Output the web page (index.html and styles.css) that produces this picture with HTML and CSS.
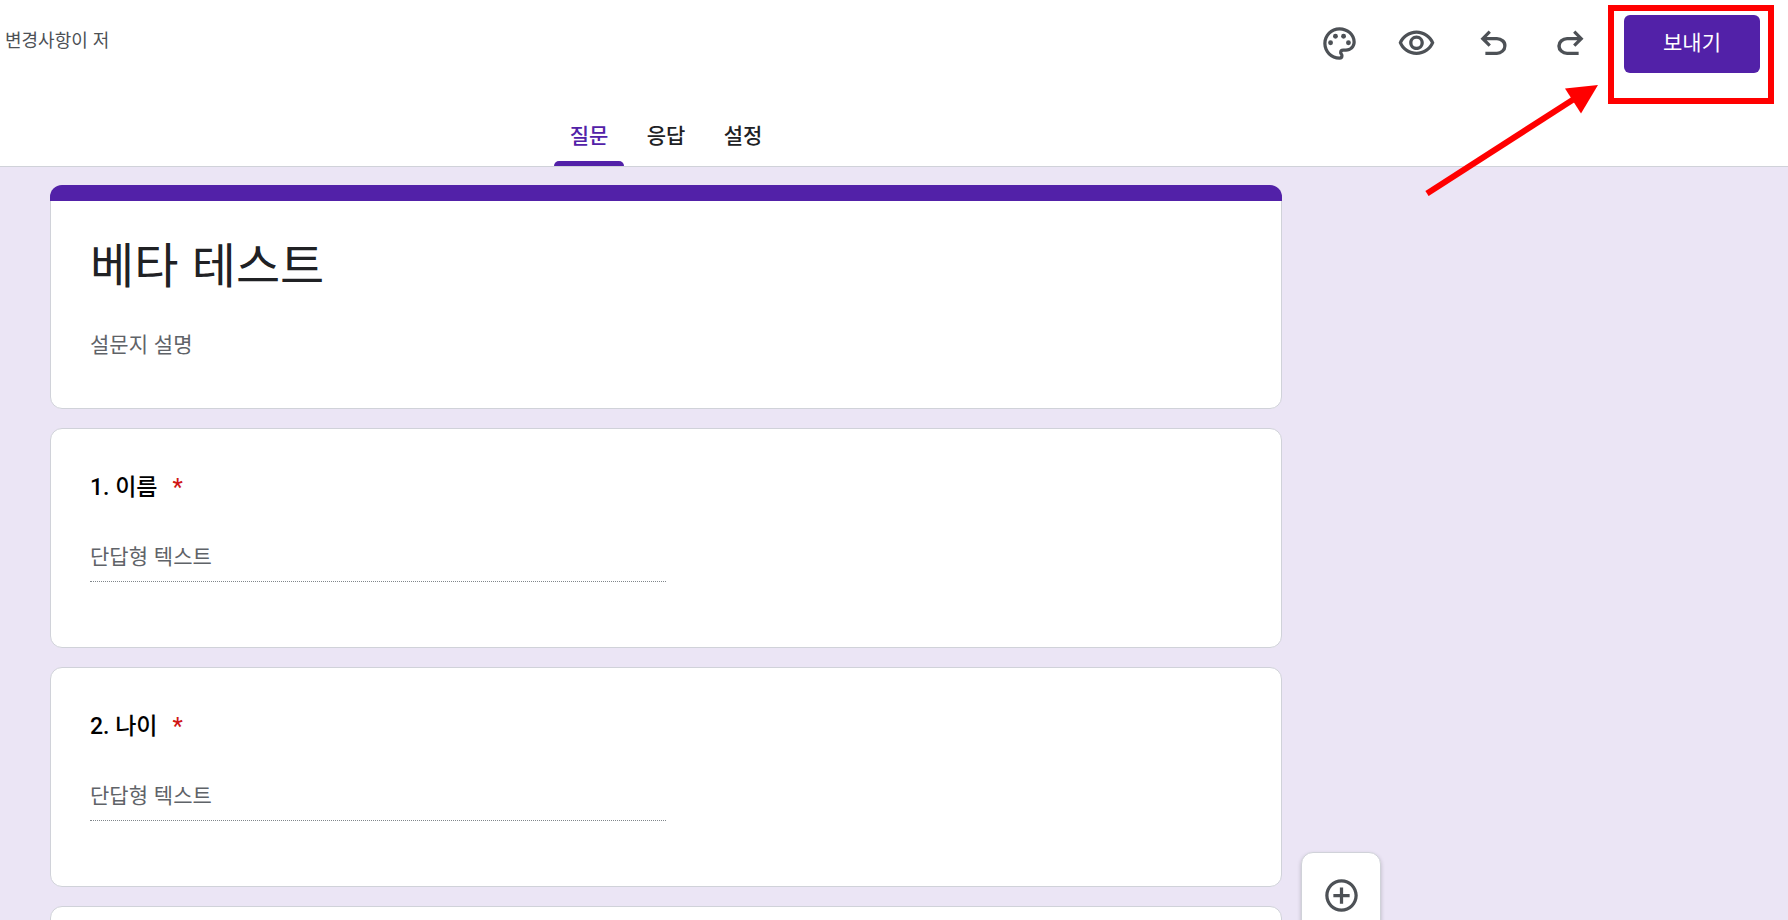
FILE: index.html
```html
<!DOCTYPE html>
<html lang="ko">
<head>
    <meta charset="UTF-8">
    <meta name="viewport" content="width=device-width, initial-scale=1.0">
    <title>베타 테스트</title>
    <link rel="stylesheet" href="styles.css">
</head>
<body>

    <header class="header">
        <div class="toolbar">
            <span class="status">변경사항이 저</span>
            <button type="button" class="icon-button" aria-label="테마 맞춤설정">
                <svg class="icon" viewBox="0 0 24 24">
                    <path d="M12 22C6.49 22 2 17.51 2 12S6.49 2 12 2s10 4.04 10 9c0 3.31-2.69 6-6 6h-1.77c-.28 0-.5.22-.5.5 0 .12.05.23.13.33.41.47.64 1.06.64 1.67A2.5 2.5 0 0 1 12 22zm0-18c-4.41 0-8 3.59-8 8s3.59 8 8 8c.28 0 .5-.22.5-.5a.54.54 0 0 0-.14-.35c-.41-.46-.63-1.05-.63-1.65a2.5 2.5 0 0 1 2.5-2.5H16c2.21 0 4-1.79 4-4 0-3.86-3.59-7-8-7z"/>
                    <circle cx="6.5" cy="11.5" r="1.5"/>
                    <circle cx="9.5" cy="7.5" r="1.5"/>
                    <circle cx="14.5" cy="7.5" r="1.5"/>
                    <circle cx="17.5" cy="11.5" r="1.5"/>
                </svg>
            </button>
            <button type="button" class="icon-button" aria-label="미리보기">
                <svg class="icon" viewBox="0 0 24 24">
                    <path d="M12 6c3.79 0 7.17 2.13 8.82 5.5C19.17 14.87 15.79 17 12 17s-7.17-2.13-8.82-5.5C4.83 8.13 8.21 6 12 6m0-2C7 4 2.73 7.11 1 11.5 2.73 15.89 7 19 12 19s9.27-3.11 11-7.5C21.27 7.11 17 4 12 4zm0 5a2.5 2.5 0 0 1 0 5 2.5 2.5 0 0 1 0-5m0-2c-2.48 0-4.5 2.02-4.5 4.5S9.52 16 12 16s4.5-2.02 4.5-4.5S14.48 7 12 7z"/>
                </svg>
            </button>
            <button type="button" class="icon-button" aria-label="실행취소">
                <svg class="icon" viewBox="0 -960 960 960">
                    <path d="M280-200v-80h284q63 0 109.500-40T720-420q0-60-46.500-100T564-560H312l104 104-56 56-200-200 200-200 56 56-104 104h252q97 0 169.500 63T800-420q0 94-72.500 157T564-200H280Z"/>
                </svg>
            </button>
            <button type="button" class="icon-button" aria-label="재실행">
                <svg class="icon" viewBox="0 -960 960 960">
                    <path d="M396-200q-97 0-169.500-63T154-420q0-94 72.500-157T396-640h252L544-744l56-56 200 200-200 200-56-56 104-104H396q-63 0-109.500 40T240-420q0 60 46.500 100T396-280h284v80H396Z"/>
                </svg>
            </button>
            <button type="button" class="send-button">보내기</button>
        </div>
        <nav class="tabs">
            <a href="#questions" class="tab tab-active">질문</a>
            <a href="#responses" class="tab">응답</a>
            <a href="#settings" class="tab">설정</a>
        </nav>
    </header>

    <main class="editor">
        <form class="form" id="questions">
            <section class="card card-title">
                <input type="text" class="form-title" aria-label="설문지 제목" value="베타 테스트">
                <input type="text" class="form-description" aria-label="설문지 설명" placeholder="설문지 설명">
            </section>
            <section class="card card-question">
                <label class="question" for="answer-name">1. 이름<span class="required">*</span></label>
                <input type="text" class="answer" id="answer-name" placeholder="단답형 텍스트" readonly>
            </section>
            <section class="card card-question">
                <label class="question" for="answer-age">2. 나이<span class="required">*</span></label>
                <input type="text" class="answer" id="answer-age" placeholder="단답형 텍스트" readonly>
            </section>
            <section class="card card-question"></section>
        </form>
        <aside class="side-toolbar">
            <button type="button" class="side-button" aria-label="질문 추가">
                <svg class="icon" viewBox="0 0 24 24">
                    <path d="M13 7h-2v4H7v2h4v4h2v-4h4v-2h-4V7zm-1-5C6.480 2 2 6.480 2 12s4.480 10 10 10 10-4.480 10-10S17.520 2 12 2zm0 18c-4.410 0-8-3.590-8-8s3.590-8 8-8 8 3.590 8 8-3.590 8-8 8z"/>
                </svg>
            </button>
        </aside>
    </main>

    <!-- Callout on the send button -->
    <div class="callout-box"></div>
    <svg class="callout-arrow" viewBox="0 0 176 112">
        <path d="M3 109.500 150 15" stroke="#ff0000" stroke-width="6"/>
        <path d="M174 1 141 4.500 157 29.500z" fill="#ff0000"/>
    </svg>

</body>
</html>
```

FILE: styles.css
```css
* { box-sizing: border-box; }
body { display: flex; flex-direction: column; position: relative; height: 100vh; margin: 0; overflow: hidden; background-color: #ebe5f5; color: #202124; font-family: "Noto Sans CJK KR", sans-serif; font-size: 21px; }
button, input { font-family: inherit; font-size: inherit; }
button { padding: 0; border: none; background: none; cursor: pointer; }
input { display: block; width: 100%; padding: 0; border: none; outline: none; background: none; color: inherit; }
input::placeholder { color: #5f6368; opacity: 1; }

/* Header */
.header { background-color: #fff; border-bottom: 1px solid #d0d2d9; }
.toolbar { display: flex; align-items: flex-start; padding: 15px 28px 0 5px; }
.status { margin-right: auto; color: #4d5156; font-size: 18px; line-height: 48px; }
.icon-button { display: flex; align-items: center; justify-content: center; width: 77px; height: 57px; }
.icon { width: 39px; height: 39px; fill: #4d5156; }
.send-button { width: 136px; height: 58px; margin-left: 15px; padding-bottom: 6px; border-radius: 6px; background-color: #5221a8; color: #fff; }
.tabs { display: flex; justify-content: center; gap: 7px; max-width: 1232px; margin: 33px 50px 0; }
.tab { position: relative; width: 70px; height: 60px; color: #202124; font-weight: 500; line-height: 56px; text-align: center; text-decoration: none; }
.tab-active { color: #5221a8; }
.tab-active::after { content: ""; position: absolute; left: 0; right: 0; bottom: 0; height: 5px; border-radius: 5px 5px 0 0; background-color: #5221a8; }

/* Editor */
.editor { display: grid; grid-template-columns: minmax(0, 1232px) 80px; gap: 19px; flex: 1; min-height: 0; padding: 18px 50px 0; overflow: hidden; }
.form { display: flex; flex-direction: column; gap: 19px; }
.card { flex-shrink: 0; border: 1px solid #d0d2d9; border-radius: 12px; background-color: #fff; }
.card-title { position: relative; padding: 44px 39px 49px; }
.card-title::before { content: ""; position: absolute; top: -1px; left: -1px; right: -1px; height: 16px; border-radius: 12px 12px 0 0; background-color: #5221a8; }
.form-title { height: 64px; font-size: 48px; }
.form-description { height: 32px; margin-top: 33px; }
.card-question { min-height: 220px; padding: 43px 39px 65px; }
.question { display: block; margin-bottom: 26px; color: #000; font-family: Roboto, "Noto Sans CJK KR", sans-serif; font-size: 23px; font-weight: 500; line-height: 32px; }
.required { margin-left: 15px; color: #d01716; }
.answer { width: 50%; height: 52px; padding-bottom: 2px; border-bottom: 1px dotted #80868b; }

/* Side toolbar */
.side-toolbar { height: 400px; margin-top: 667px; padding-top: 13px; border: 1px solid #d0d2d9; border-radius: 12px; background-color: #fff; box-shadow: 0 2px 4px rgba(0, 0, 0, 0.2); }
.side-button { display: flex; align-items: center; justify-content: center; width: 100%; height: 58px; }

/* Callout */
.callout-box { position: absolute; top: 5px; right: 14px; width: 166px; height: 99px; border: 6px solid #ff0000; pointer-events: none; }
.callout-arrow { position: absolute; top: 84px; right: 188px; width: 176px; height: 112px; pointer-events: none; }
```
